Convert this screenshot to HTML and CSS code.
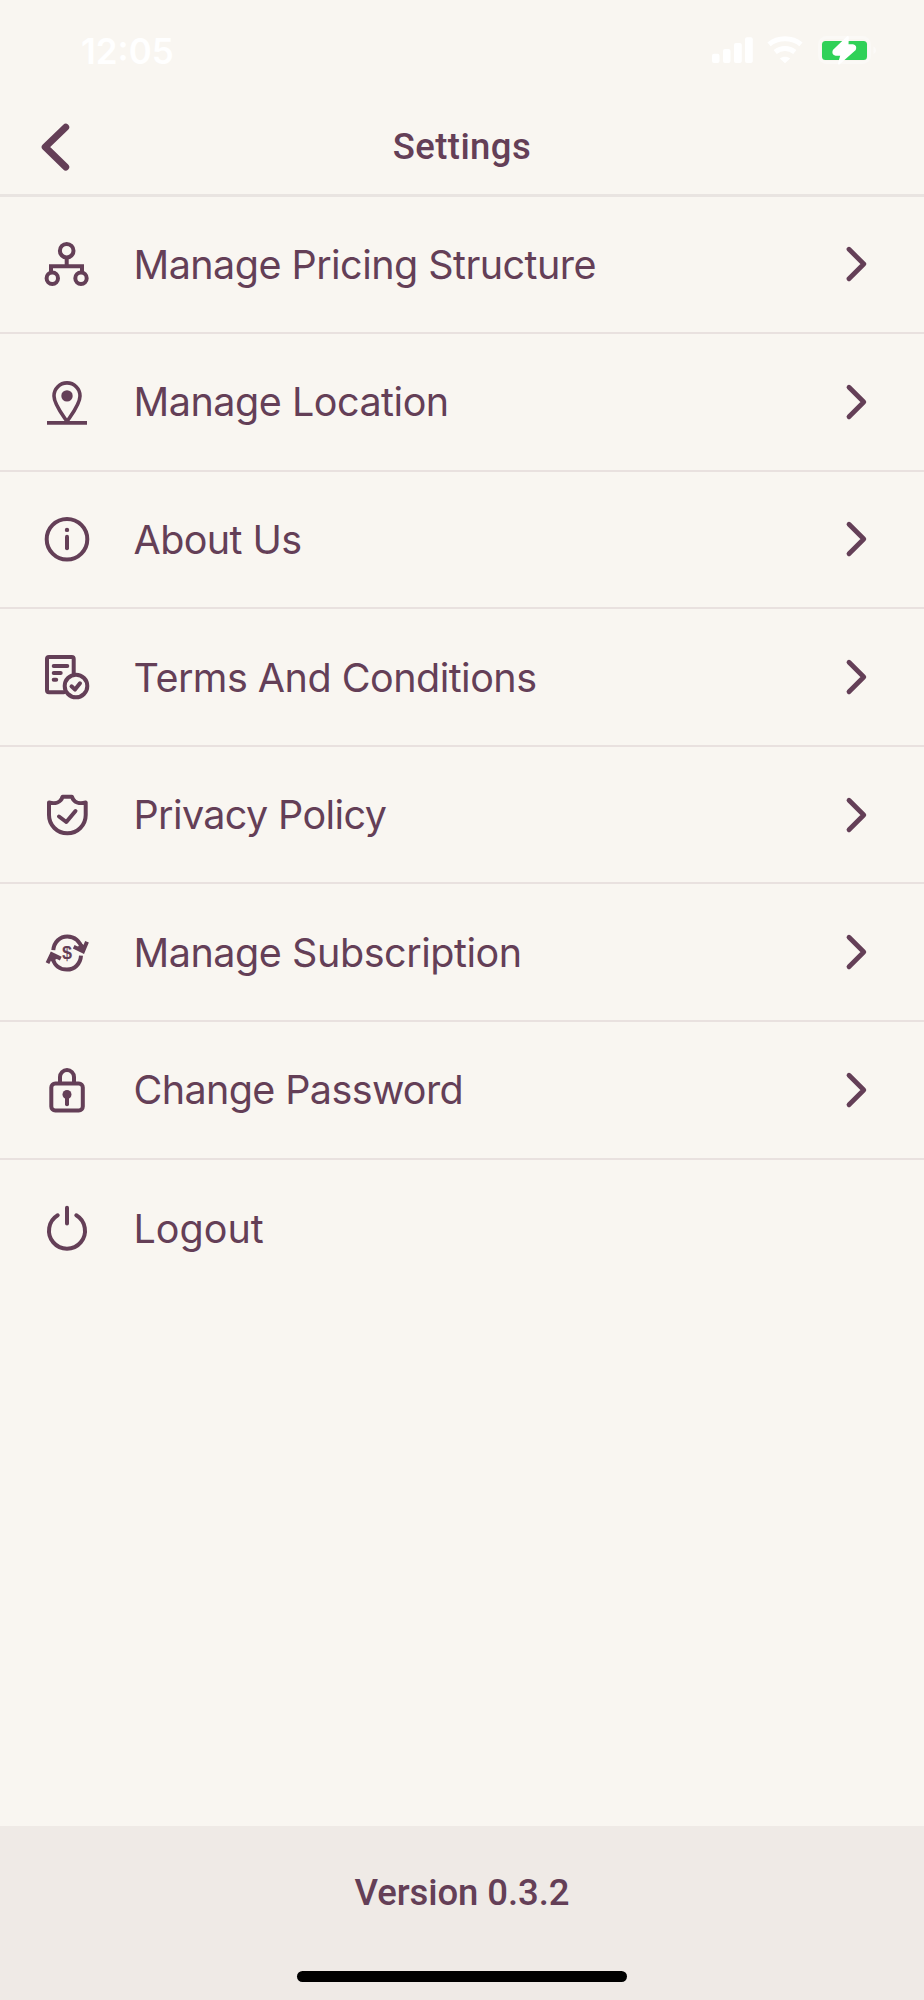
FILE: index.html
```html
<!DOCTYPE html>
<html lang="en">
<head>
<meta charset="utf-8">
<title>Settings</title>
<link rel="stylesheet" href="styles.css">
</head>
<body>
<div class="screen">
  <div class="status">
    <span class="time">12:05</span>
    <svg class="status-icons" width="166" height="32" viewBox="0 0 166 32">
      <g fill="#fff">
        <rect x="2" y="19.7" width="7.5" height="9.3" rx="2"/>
        <rect x="13" y="15" width="7.5" height="14" rx="2"/>
        <rect x="24" y="9" width="7.8" height="20" rx="2"/>
        <rect x="35" y="3.3" width="7.8" height="25.7" rx="2"/>
        <path d="M75 29.2l-5.2-4.6c2.9-2.6 7.5-2.6 10.4 0z"/>
      </g>
      <g fill="none" stroke="#fff" stroke-width="5">
        <path d="M59 10.3c9-7.5 23-7.5 32 0"/>
        <path d="M65.2 18c5.8-4.7 13.800-4.700 19.600 0"/>
      </g>
      <rect x="109.500" y="3.500" width="50" height="25" rx="7" fill="none" stroke="#fbf9f6" stroke-width="3"/>
      <path d="M163.500 12.500c3.300 1.500 3.300 6 0 7.500z" fill="#fcfaf8"/>
      <rect x="112" y="7" width="45" height="19" rx="3.500" fill="#30d158"/>
      <path d="M137.800 3L123.800 16.500q-1.500 3.500 2 4.200h5.700l-2.500 8.800L144.800 15.500q1.500-3.500-2-4.200h-5.300z" fill="#fff" stroke="#fff" stroke-width="2" stroke-linejoin="round"/>
    </svg>
  </div>
  <header class="header">
    <svg class="back" width="30" height="50" viewBox="0 0 30 50"><path d="M25.700 5.300L5.200 25l20.500 20"/></svg>
    <h1 class="title">Settings</h1>
  </header>
  <main class="list">
    <div class="row">
      <svg class="icon" viewBox="0 0 48 48"><circle cx="23.700" cy="9.700" r="6.800"/><circle cx="9.300" cy="37.300" r="5.700"/><circle cx="38" cy="37.300" r="5.700"/><path d="M23.700 16.500v8.800M8 32v-6.700h31V32"/></svg>
      <span class="label pricing">Manage Pricing Structure</span>
      <svg class="chevron" viewBox="0 0 24 38"><path d="M4 4.300L18.800 19 4 33.700"/></svg>
    </div>
    <div class="row">
      <svg class="icon thin" viewBox="0 0 48 48"><path d="M24 42.500C19 35 11 25 11 16.900a13 13 0 0 1 26 0C37 25 29 35 24 42.500zM4 43.900h40"/><circle class="solid" cx="24" cy="16.900" r="5.700"/></svg>
      <span class="label location">Manage Location</span>
      <svg class="chevron" viewBox="0 0 24 38"><path d="M4 4.300L18.800 19 4 33.700"/></svg>
    </div>
    <div class="row">
      <svg class="icon" viewBox="0 0 48 48"><circle cx="24" cy="23.200" r="20.300"/><path class="round" d="M24 20.700v11.600"/><circle class="solid" cx="24" cy="13.900" r="2.200"/></svg>
      <span class="label about">About Us</span>
      <svg class="chevron" viewBox="0 0 24 38"><path d="M4 4.300L18.800 19 4 33.700"/></svg>
    </div>
    <div class="row">
      <svg class="icon" viewBox="0 0 48 48"><path class="round" d="M21 38.300H6a2 2 0 0 1-2-2V5a2 2 0 0 1 2-2h22.700a2 2 0 0 1 2 2v14M10.700 12h13.600M10.700 19h7M10.700 25.700h2.500M28.500 32.300l3.500 3.300 5-6.300"/><circle cx="33" cy="32" r="11.300"/></svg>
      <span class="label terms">Terms And Conditions</span>
      <svg class="chevron" viewBox="0 0 24 38"><path d="M4 4.300L18.800 19 4 33.700"/></svg>
    </div>
    <div class="row">
      <svg class="icon" viewBox="0 0 48 48"><path class="round" d="M6 10.500c6 1.500 12 0 13.500-5.800h9.500c1.500 5.800 7.500 7.300 13.700 5.800V23a18.350 18.350 0 0 1-36.700 0zM16 24.500l7.300 5.500 9.200-11"/></svg>
      <span class="label privacy">Privacy Policy</span>
      <svg class="chevron" viewBox="0 0 24 38"><path d="M4 4.300L18.800 19 4 33.700"/></svg>
    </div>
    <div class="row">
      <svg class="icon" viewBox="0 0 48 48"><path d="M10.300 21.100C11 13 17 7.400 24.300 7.400c7 0 13 4.600 14.700 12.600M38 26.700C37.500 35 31.500 40.600 24 40.600c-6.500 0-12-3.600-14.300-10.600M30.700 17.800l9.300 4.400 4-9.500M17.800 29.600l-9-4.500L4.500 34.200"/><path class="solid" d="M34 18l5.500-3 3.500 3-2.500 6.500zM14.500 29.500l-5.500 3-3.500-3L8 23z"/><text class="dollar" x="24" y="30">$</text></svg>
      <span class="label subscription">Manage Subscription</span>
      <svg class="chevron" viewBox="0 0 24 38"><path d="M4 4.300L18.800 19 4 33.700"/></svg>
    </div>
    <div class="row">
      <svg class="icon" viewBox="0 0 48 48"><rect x="8.300" y="16.500" width="31.500" height="27" rx="4"/><path d="M17 16.500V10a7 7 0 0 1 14 0v6.500"/><path class="round" d="M24 28v9.200"/><circle class="solid" cx="24" cy="27.500" r="4.500"/></svg>
      <span class="label password">Change Password</span>
      <svg class="chevron" viewBox="0 0 24 38"><path d="M4 4.300L18.800 19 4 33.700"/></svg>
    </div>
    <div class="row">
      <svg class="icon" viewBox="0 0 48 48"><path class="round" d="M24 2.800v15.800M14.700 10.300a18 18 0 1 0 18.600 0"/></svg>
      <span class="label logout">Logout</span>
    </div>
  </main>
  <footer class="footer">
    <span class="version">Version 0.3.2</span>
    <div class="home-bar"></div>
  </footer>
</div>
</body>
</html>
```

FILE: styles.css
```css
* { box-sizing: border-box; }
body { margin: 0; background: #f9f6f1; color: #643f57; }
.screen { width: 924px; height: 2000px; display: flex; flex-direction: column; overflow: hidden; }
.status { height: 100px; padding: 34px 48px 0 81px; display: flex; justify-content: space-between; align-items: flex-start; }
.time { font: 600 35px/34px Inter, sans-serif; color: #fff; letter-spacing: 0; }
.status-icons { display: block; }
.header { height: 96.500px; flex: none; border-bottom: 3px solid #e9e4e1; display: grid; grid-template-columns: 100px 1fr 100px; align-items: center; }
.back { margin-left: 40px; fill: none; stroke: #643f57; stroke-width: 7; stroke-linecap: round; stroke-linejoin: round; }
.title { margin: 0; padding-top: 1px; text-align: center; font: 500 36.500px/44px Roboto, sans-serif; letter-spacing: 0.400px; }
.list { flex: 1; }
.row { height: 137.600px; padding: 0 55px 0 43px; border-bottom: 2px solid #e9e1df; display: flex; align-items: center; }
.row:last-child { border-bottom: 0; }
.icon { width: 48px; height: 48px; flex: none; margin-top: 2px; fill: none; stroke: #643f57; stroke-width: 4; }
.thin { stroke-width: 3.600; }
.round { stroke-linecap: round; stroke-linejoin: round; }
.solid { fill: #643f57; stroke: none; }
.dollar { font: 700 18px "Liberation Sans", sans-serif; fill: #643f57; stroke: none; text-anchor: middle; }
.label { flex: 1; margin-left: 42.500px; padding-top: 1px; font: 400 39.500px/48px Inter, sans-serif; white-space: nowrap; }
.pricing { letter-spacing: -0.540px; }
.location { letter-spacing: -0.480px; }
.about { letter-spacing: -0.600px; }
.terms { letter-spacing: -0.520px; }
.privacy { letter-spacing: -0.620px; }
.subscription { letter-spacing: -0.450px; }
.password { letter-spacing: -0.620px; }
.logout { letter-spacing: 0; }
.chevron { width: 24px; height: 38px; flex: none; fill: none; stroke: #643f57; stroke-width: 4.800; stroke-linecap: round; stroke-linejoin: round; }
.footer { height: 174px; flex: none; padding: 44px 0 18px; background: #efeae6; display: flex; flex-direction: column; align-items: center; justify-content: space-between; }
.version { padding-top: 1px; font: 500 36.500px/44px Roboto, sans-serif; letter-spacing: -0.080px; }
.home-bar { width: 330px; height: 11px; border-radius: 6px; background: #000; }
```
